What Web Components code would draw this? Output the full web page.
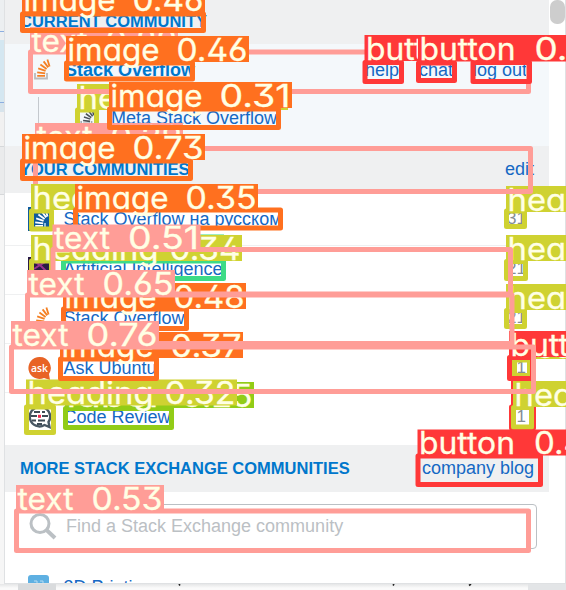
<!DOCTYPE html>
<html lang="en"><head><meta charset="utf-8"><title>Communities</title>
<style>html,body{margin:0;width:566px;height:590px;overflow:hidden;background:#fff;font:18px/22px "Liberation Sans",Arial,sans-serif}</style></head>
<body><community-page></community-page>
<script>
const define=(name,css,html)=>customElements.define(name,class extends HTMLElement{
  connectedCallback(){ if(this.shadowRoot)return;
    this.attachShadow({mode:'open'}).innerHTML='<style>*{box-sizing:border-box}'+css+'</style>'+(typeof html==='function'?html(this):html);
  }});

const stack=(bars,tray)=>`<g fill="none" stroke-width="1.8"><path stroke="${tray}" d="M0 15v5.500h12v-5.500"/><path stroke="${bars}" d="M2.200 17.800h7.800M2.200 14.400l8 1M3.200 10.400l7.400 2.400M5.400 6.600l6.200 4.400M8.600 3.400l4.600 6M12.400 1.400l2.200 7"/></g>`;
const icons={
  so:`<svg width="24" height="24" viewBox="-6 0 24 24">${stack('#f48024','#bcbbbb')}</svg>`,
  meta:`<svg width="20" height="20" viewBox="-2 0 22 23">${stack('#4b5359','#a7abae')}</svg>`,
  ru:`<svg width="24" height="24" viewBox="0 0 24 24"><path fill="#0f5b9c" d="M0 0h24v24H0z"/><g transform="translate(5 1)">${stack('#fff','#9fcbe8')}</g></svg>`,
  ai:`<svg width="24" height="24" viewBox="0 0 24 24"><path fill="#2a1b45" d="M0 0h24v24H0z"/><path d="M7 5l5 3 7-4M6 12l6-4 6 6" stroke="#9b308f" stroke-width="2" fill="none"/></svg>`,
  ask:`<svg width="24" height="24" viewBox="0 0 24 24"><path fill="#e86325" d="M11.500 1a11 11 0 1 0 4.500 21l6 2-1-6A11 11 0 0 0 11.500 1z"/><text x="3" y="15.500" font-family="Open Sans,sans-serif" font-weight="600" font-size="10.500" textLength="17" lengthAdjust="spacingAndGlyphs" fill="#fff">ask</text></svg>`,
  cr:`<svg width="24" height="24" viewBox="0 0 24 24"><path fill="#fff" stroke="#485763" stroke-width="2.400" d="M11.500 2a9.700 9.700 0 1 0 5 18l5 2-1-5A9.700 9.700 0 0 0 11.500 2z"/><path stroke="#3f4b55" stroke-width="2" d="M6 7h6M14 7h3M3 11h6M14 11h6M4 15.500h4M10 15.500h7M9 19h5"/><path fill="#f0254a" d="M10 9.800h3v3h-3z"/></svg>`,
  p3:`<svg width="24" height="24" viewBox="0 0 24 24"><rect width="21" height="23" rx="3" fill="#5eb0e2"/><path d="M6 6h3v4M12 6h3v4" stroke="#b5dcf3" fill="none"/></svg>`
};
define('site-icon',':host{display:block;flex:none;line-height:0}svg{display:block}',e=>icons[e.getAttribute('kind')]);

define('section-header',
 ':host{display:flex;align-items:center;justify-content:space-between;background:#eff0f1;padding:0 15px 2px;color:#1568c4;flex:none}b{font-size:16.500px;color:#0077cc;white-space:nowrap;padding-top:1px}',
 '<b><slot></slot></b><slot name="end"></slot>');

define('community-row',
 ':host{display:flex;align-items:center;height:49.300px;padding:0 23px 1px;border-bottom:1px solid #eff0f1;color:#1568c4;flex:none}:host([last]){border:0}site-icon{margin-right:11.500px}.n{margin-left:auto;color:#848d95;font-size:17px}',
 e=>`<site-icon kind="${e.getAttribute('icon')}"></site-icon><span><slot></slot></span><span class="n">${e.getAttribute('count')||''}</span>`);

define('current-site',
 ':host{display:block;height:102px;background:#f4f8fb;color:#1568c4;padding-top:12px;flex:none}.r{display:flex;align-items:center;height:28px;padding-left:24px}b{margin-left:12px;color:#0077cc}.l{display:flex;gap:20px;margin-left:auto;padding-right:22px}.m{display:flex;align-items:center;height:40px;margin:13px 0 0 33px;border-left:1px solid #c4c9ce;padding:2px 0 0 40px;gap:12px}',
 '<div class="r"><site-icon kind="so"></site-icon><b>Stack Overflow</b><div class="l"><span>help</span><span>chat</span><span>log out</span></div></div><div class="m"><site-icon kind="meta"></site-icon><span>Meta Stack Overflow</span></div>');

define('search-field',
 ':host{display:flex;align-items:center;height:45px;margin:12px 12px 26px 11px;border:1px solid #bbc0c4;border-radius:4px;color:#bbc0c4;padding:0 0 0 12px;gap:9px;flex:none}svg{flex:none}',
 '<svg width="28" height="28" viewBox="0 0 28 28" fill="none" stroke="#bbc0c4"><circle cx="11" cy="11.500" r="9" stroke-width="3"/><path d="M17.500 18l8.500 8" stroke-width="4"/></svg><span><slot></slot></span>');

define('scroll-bar',':host{display:block;width:16px;background:#fff;flex:none}i{display:block;width:15px;height:24px;margin-left:1px;background:#cdcdcd;border-radius:7px}','<i></i>');

define('detection-box',
 ':host{display:block;position:absolute;inset:0}svg{display:block;width:566px;height:590px}text{font:400 31px Inter,"Open Sans",sans-serif;font-feature-settings:"cv11","ss01";fill:#ffffe4;stroke:#ffffe4;stroke-width:.3}',
 e=>{
  const [x,y,r,b]=e.getAttribute('box').split(' ').map(Number),kind=e.getAttribute('kind'),score=e.getAttribute('score');
  const c=e.getAttribute('tone')||{image:'#ff701f',text:'#ff9d97',button:'#ff3838',heading:'#cfd231'}[kind];
  const [w,off]={image:[92,110],text:[56,75],button:[96,116],heading:[126,138],link:[62,88],label:[92,116]}[kind];
  const L=x-.5,T=Number(e.getAttribute('top')),W=off+73;
  return `<svg><rect x="${x}" y="${y}" width="${r-x}" height="${b-y}" fill="none" stroke="${c}" stroke-width="5" stroke-linejoin="round"/><rect x="${L}" y="${T}" width="${W}" height="26" fill="${c}"/><text x="${L+1.500}" y="${T+24.500}" textLength="${w}" lengthAdjust="spacingAndGlyphs">${kind}</text><text x="${L+off+.5}" y="${T+24.500}" textLength="71" lengthAdjust="spacingAndGlyphs">${score}</text></svg>`;
 });

// [kind, score, left top right bottom, label top, optional colour], lowest confidence first
const detections=[
 ['heading','0.25','77.5 110 96.500 133',84],
 ['label','0.25','65.500 408.500 171.500 427.500',382,'#92cc17'],
 ['link','0.26','63.500 261 223.500 278.500',234.500,'#3ddb86'],
 ['button','0.27','511.500 407 533.500 428',381],
 ['heading','0.28','506.500 211 524.500 226.500',186],
 ['heading','0.28','506.500 261.500 525.500 278.500',235],
 ['heading','0.28','506.500 310.500 524.500 326.500',284],
 ['heading','0.28','514.500 360 529.500 375.500',333],
 ['button','0.28','509.500 357.500 532.500 378.500',331],
 ['heading','0.28','513.500 407.500 531.500 427',381],
 ['text','0.29','30.500 52 528.500 91.500',27],
 ['text','0.29','35.500 148.500 530.500 191.500',123],
 ['heading','0.30','31.500 211 51.500 229',184],
 ['image','0.31','109.500 109 278.500 127.500',82],
 ['heading','0.32','26.500 407 53.500 432.500',379.500],
 ['heading','0.34','31.500 261 51.500 280',235],
 ['image','0.35','75.500 210 280.500 228',184],
 ['image','0.37','60.500 359 156.500 378.500',332],
 ['button','0.39','365 62.500 401.500 81.500',35],
 ['button','0.40','473 62.500 529.500 81.500',35],
 ['button','0.41','418.500 63 454.500 80.500',35.500],
 ['button','0.42','418 456 540.500 484.500',429.500],
 ['image','0.46','22.500 14 203.500 30.500',-14],
 ['image','0.46','66.500 63 192.500 79',36],
 ['image','0.48','63.500 309 186.500 328.500',283],
 ['text','0.51','53 249.500 510.500 294',224.500],
 ['text','0.53','16.500 511 528.500 550.500',485],
 ['text','0.65','27.500 295 512 343.500',270],
 ['image','0.73','22.500 161 190.500 178.500',134],
 ['text','0.76','11.500 347 533.500 391.500',321]];

define('community-page',
 `:host{display:flex;flex-direction:column;position:relative;width:566px;height:590px;overflow:hidden;background:#fafafa}
 .top{display:flex;height:584px;flex:none}
 .edge{width:4px;flex:none;background:linear-gradient(#eceff1 0 31px,#8caee0 31px 32px,#eceff1 32px 40px,#d4e7f1 40px 102px,#8caee0 102px 103px,#d7e4ec 103px 112px,#f1f1f1 112px 146px,#d6d8da 146px 147px,#eaebec 147px 194px,#d6d8da 194px 195px,#f6f6f6 195px)}
 .panel{display:flex;width:562px;height:584px;border:solid #dfe1e3;border-width:0 1px 1px;background:#fff;overflow:hidden}
 .list{display:flex;flex-direction:column;width:544px;height:583px;overflow:hidden;flex:none}
 .foot{display:flex;height:6px;background:linear-gradient(#e5e6e7,transparent 4px)}.foot i{width:38px;height:6px;background:#d9dbdd;margin-left:18px}.foot b{margin-left:auto;width:38px;background:#e3e5e7}.foot svg{flex:none}
 .over{position:absolute;inset:0}`,
 `<div class="top"><div class="edge"></div><div class="panel"><div class="list">
 <section-header style="height:44px;padding-bottom:4px">CURRENT COMMUNITY</section-header><current-site></current-site>
 <section-header style="height:47px">YOUR COMMUNITIES<span slot="end">edit</span></section-header>
 <community-row icon="ru" count="31" style="height:52.500px;padding-bottom:0;padding-top:1px">Stack Overflow на русском</community-row>
 <community-row icon="ai" count="21">Artificial Intelligence</community-row>
 <community-row icon="so" count="21">Stack Overflow</community-row>
 <community-row icon="ask" count="1">Ask Ubuntu</community-row>
 <community-row icon="cr" count="1" last style="height:51.600px;padding-bottom:4px">Code Review</community-row>
 <section-header style="height:47px;padding-bottom:1px">MORE STACK EXCHANGE COMMUNITIES<span slot="end">company blog</span></section-header>
 <search-field>Find a Stack Exchange community</search-field>
 <community-row icon="p3" last style="height:24px;padding-bottom:0">3D Printing</community-row>
 </div><scroll-bar></scroll-bar></div></div>
 <div class="foot"><i></i><svg width="435" height="6"><path d="M123 0l1 1.500M338 0l-1 1.500M415 0l-2 1.500" stroke="#222" stroke-width="1.600"/></svg><b></b></div>
 <div class="over">${detections.map(d=>`<detection-box kind="${d[0]}" score="${d[1]}" box="${d[2]}" top="${d[3]}" ${d[4]?`tone="${d[4]}"`:''}></detection-box>`).join('')}</div>`);
</script></body></html>
